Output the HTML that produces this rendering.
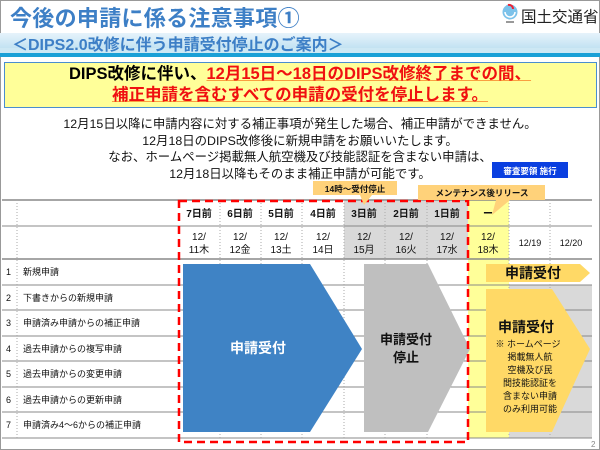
<!DOCTYPE html>
<html><head><meta charset="utf-8"><style>
*{margin:0;padding:0;box-sizing:border-box}
body{width:600px;height:450px;overflow:hidden;background:#fff;font-family:"Liberation Sans","Noto Sans CJK JP",sans-serif;position:relative}
.a{position:absolute;white-space:nowrap}
</style></head><body>
<div class="a" style="left:0;top:0;width:600px;height:450px;border:1px solid #999"></div>
<div class="a" style="left:10px;top:1px;font-size:22px;font-weight:bold;color:#3d7fc6;letter-spacing:0.3px">今後の申請に係る注意事項①</div>
<div class="a" style="left:0;top:33px;width:600px;height:19px;background:linear-gradient(#e6f3fb,#b9def0)"></div>
<div class="a" style="left:0;top:48px;width:600px;height:5px;background:#cde8f4"></div>
<div class="a" style="left:0;top:53px;width:600px;height:4px;background:#1aa0d6"></div>
<div class="a" style="left:12px;top:31px;font-size:16px;font-weight:bold;color:#3d7fc6">＜DIPS2.0改修に伴う申請受付停止のご案内＞</div>
<svg class="a" style="left:500px;top:3px" width="20" height="22" viewBox="0 0 20 22"><circle cx="10" cy="9" r="7.5" fill="#7cc2ea"/><path d="M5 9a5 5 0 0 0 10 0" fill="none" stroke="#fff" stroke-width="1.5"/><path d="M8 2a4 4 0 0 1 5 4" fill="none" stroke="#e23" stroke-width="2"/><rect x="6" y="18" width="8" height="2" fill="#999"/></svg>
<div class="a" style="left:521px;top:5px;font-size:15.5px;color:#222">国土交通省</div>
<div class="a" style="left:4px;top:62px;width:593px;height:46px;background:#ffff99;border:1.5px solid #4a8ed0"></div>
<div class="a" style="left:0;top:64px;width:600px;text-align:center;font-size:16.5px;font-weight:bold;line-height:21px">DIPS改修に伴い、<span style="color:#f01010;text-decoration:underline;text-decoration-color:#f9a040">12月15日～18日のDIPS改修終了までの間、</span><br><span style="color:#f01010;text-decoration:underline;text-decoration-color:#f9a040">補正申請を含むすべての申請の受付を停止します。</span></div>
<div class="a" style="left:0;top:116px;width:600px;text-align:center;font-size:12.4px;line-height:16.5px;color:#111">12月15日以降に申請内容に対する補正事項が発生した場合、補正申請ができません。<br>12月18日のDIPS改修後に新規申請をお願いいたします。<br>なお、ホームページ掲載無人航空機及び技能認証を含まない申請は、<br>12月18日以降もそのまま補正申請が可能です。</div>
<svg class="a" style="left:0;top:0" width="600" height="450" font-family="Liberation Sans, Noto Sans CJK JP, sans-serif">
<rect x="344" y="200" width="124" height="59" fill="#d9d9d9"/>
<rect x="468" y="200" width="41" height="238" fill="#ffff99"/>
<rect x="509" y="285" width="83" height="153" fill="#d9d9d9"/>
<g stroke="#888" stroke-width="1">
<line x1="2" y1="200" x2="592" y2="200" stroke-width="1.5"/>
<line x1="2" y1="226" x2="592" y2="226"/>
<line x1="2" y1="259" x2="592" y2="259" stroke-width="1.5"/>
<line x1="2" y1="285" x2="592" y2="285"/><line x1="2" y1="310" x2="592" y2="310"/><line x1="2" y1="336" x2="592" y2="336"/><line x1="2" y1="361" x2="592" y2="361"/><line x1="2" y1="387" x2="592" y2="387"/><line x1="2" y1="412" x2="592" y2="412"/><line x1="2" y1="438" x2="592" y2="438"/>
</g>
<g stroke="#aaa" stroke-dasharray="1,2">
<line x1="17" y1="200" x2="17" y2="438"/><line x1="220" y1="200" x2="220" y2="438"/><line x1="261" y1="200" x2="261" y2="438"/><line x1="302" y1="200" x2="302" y2="438"/><line x1="344" y1="200" x2="344" y2="438"/><line x1="385" y1="200" x2="385" y2="438"/><line x1="427" y1="200" x2="427" y2="438"/><line x1="509" y1="200" x2="509" y2="438"/><line x1="550" y1="200" x2="550" y2="438"/>
</g>
<g font-size="10" font-weight="bold" text-anchor="middle" fill="#111">
<text x="199" y="217">7日前</text><text x="240" y="217">6日前</text><text x="281" y="217">5日前</text><text x="323" y="217">4日前</text><text x="364" y="217">3日前</text><text x="406" y="217">2日前</text><text x="447" y="217">1日前</text><text x="488" y="217">ー</text>
</g>
<g font-size="10" text-anchor="middle" fill="#111">
<text x="199" y="240">12/</text><text x="199" y="253">11木</text>
<text x="240" y="240">12/</text><text x="240" y="253">12金</text>
<text x="281" y="240">12/</text><text x="281" y="253">13土</text>
<text x="323" y="240">12/</text><text x="323" y="253">14日</text>
<text x="364" y="240">12/</text><text x="364" y="253">15月</text>
<text x="406" y="240">12/</text><text x="406" y="253">16火</text>
<text x="447" y="240">12/</text><text x="447" y="253">17水</text>
<text x="488" y="240">12/</text><text x="488" y="253">18木</text>
<text x="530" y="246" font-size="9">12/19</text><text x="571" y="246" font-size="9">12/20</text>
</g>
<g font-size="9" fill="#111">
<text x="6" y="275">1</text><text x="6" y="301">2</text><text x="6" y="326">3</text><text x="6" y="352">4</text><text x="6" y="377">5</text><text x="6" y="403">6</text><text x="6" y="428">7</text>
<text x="23" y="275">新規申請</text><text x="23" y="301">下書きからの新規申請</text><text x="23" y="326">申請済み申請からの補正申請</text><text x="23" y="352">過去申請からの複写申請</text><text x="23" y="377">過去申請からの変更申請</text><text x="23" y="403">過去申請からの更新申請</text><text x="23" y="428">申請済み4～6からの補正申請</text>
</g>
<polygon points="183,264 310,264 362,349 310,432 183,432" fill="#3f83c5"/>
<text x="258" y="353" font-size="14" font-weight="bold" fill="#fff" text-anchor="middle">申請受付</text>
<polygon points="364,264 428,264 470,349 428,432 364,432" fill="#bfbfbf"/>
<text x="406" y="344" font-size="13" font-weight="bold" fill="#111" text-anchor="middle">申請受付</text>
<text x="406" y="362" font-size="13" font-weight="bold" fill="#111" text-anchor="middle">停止</text>
<polygon points="486,264 580,264 590,273 580,282 486,282" fill="#ffd966"/>
<text x="533" y="278" font-size="14" font-weight="bold" fill="#111" text-anchor="middle">申請受付</text>
<polygon points="486,289 552,289 590,349 552,432 486,432" fill="#ffd966"/>
<text x="526" y="332" font-size="14" font-weight="bold" fill="#111" text-anchor="middle">申請受付</text>
<g font-size="9" fill="#111" text-anchor="middle">
<text x="528" y="347">※ ホームページ</text><text x="530" y="360">掲載無人航</text><text x="530" y="373">空機及び民</text><text x="530" y="386">間技能認証を</text><text x="530" y="399">含まない申請</text><text x="530" y="412">のみ利用可能</text>
</g>
<rect x="179" y="201" width="289" height="241" fill="none" stroke="#f00" stroke-width="2.5" stroke-dasharray="8,5"/>
<polygon points="313,181 397,181 397,195 372,195 364,205 360,195 313,195" fill="#ffd27a"/>
<text x="355" y="192" font-size="8.5" font-weight="bold" text-anchor="middle" fill="#111">14時～受付停止</text>
<polygon points="418,185 545,185 545,200 510,200 492,215 496,200 418,200" fill="#ffd27a"/>
<text x="482" y="196" font-size="8.5" font-weight="bold" text-anchor="middle" fill="#111">メンテナンス後リリース</text>
<rect x="492" y="162" width="76" height="16" fill="#0a3fe0"/>
<text x="530" y="174" font-size="8.5" font-weight="bold" text-anchor="middle" fill="#fff">審査要領 施行</text>
<text x="591" y="447" font-size="8" fill="#888">2</text>
</svg>
</body></html>
